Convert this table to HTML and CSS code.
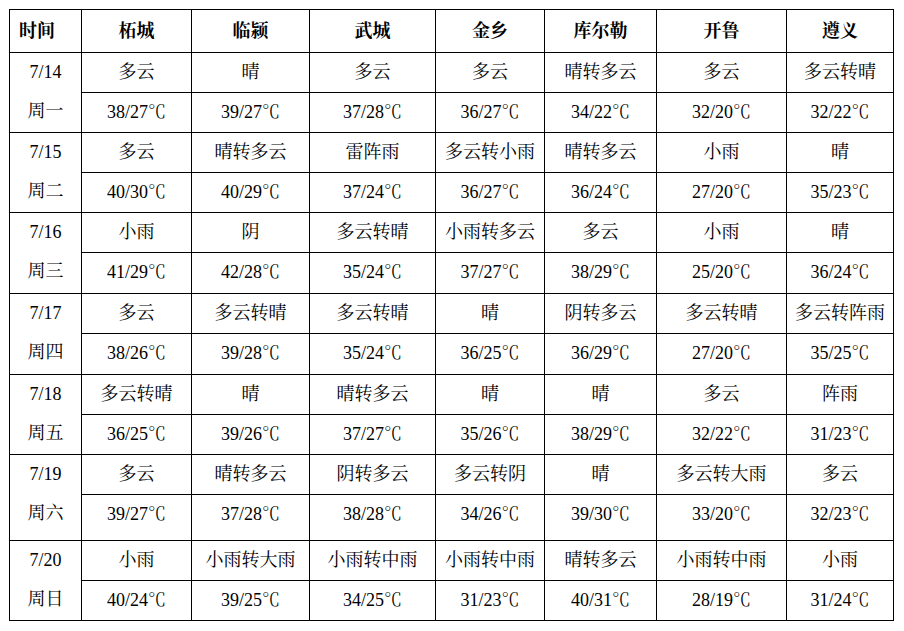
FILE: index.html
```html
<!DOCTYPE html>
<html lang="zh">
<head>
<meta charset="utf-8">
<title>天气预报</title>
<link rel="stylesheet" href="styles.css">
</head>
<body>
<div class="table">
  <div class="cell head first">时间</div>
  <div class="cell head">柘城</div>
  <div class="cell head">临颍</div>
  <div class="cell head">武城</div>
  <div class="cell head">金乡</div>
  <div class="cell head">库尔勒</div>
  <div class="cell head">开鲁</div>
  <div class="cell head">遵义</div>

  <div class="cell date"><span>7/14</span><span>周一</span></div>
  <div class="cell">多云</div><div class="cell">晴</div><div class="cell">多云</div><div class="cell">多云</div><div class="cell">晴转多云</div><div class="cell">多云</div><div class="cell">多云转晴</div>
  <div class="cell">38/27<span class="u">℃</span></div><div class="cell">39/27<span class="u">℃</span></div><div class="cell">37/28<span class="u">℃</span></div><div class="cell">36/27<span class="u">℃</span></div><div class="cell">34/22<span class="u">℃</span></div><div class="cell">32/20<span class="u">℃</span></div><div class="cell">32/22<span class="u">℃</span></div>

  <div class="cell date"><span>7/15</span><span>周二</span></div>
  <div class="cell">多云</div><div class="cell">晴转多云</div><div class="cell">雷阵雨</div><div class="cell">多云转小雨</div><div class="cell">晴转多云</div><div class="cell">小雨</div><div class="cell">晴</div>
  <div class="cell">40/30<span class="u">℃</span></div><div class="cell">40/29<span class="u">℃</span></div><div class="cell">37/24<span class="u">℃</span></div><div class="cell">36/27<span class="u">℃</span></div><div class="cell">36/24<span class="u">℃</span></div><div class="cell">27/20<span class="u">℃</span></div><div class="cell">35/23<span class="u">℃</span></div>

  <div class="cell date"><span>7/16</span><span>周三</span></div>
  <div class="cell">小雨</div><div class="cell">阴</div><div class="cell">多云转晴</div><div class="cell">小雨转多云</div><div class="cell">多云</div><div class="cell">小雨</div><div class="cell">晴</div>
  <div class="cell">41/29<span class="u">℃</span></div><div class="cell">42/28<span class="u">℃</span></div><div class="cell">35/24<span class="u">℃</span></div><div class="cell">37/27<span class="u">℃</span></div><div class="cell">38/29<span class="u">℃</span></div><div class="cell">25/20<span class="u">℃</span></div><div class="cell">36/24<span class="u">℃</span></div>

  <div class="cell date"><span>7/17</span><span>周四</span></div>
  <div class="cell">多云</div><div class="cell">多云转晴</div><div class="cell">多云转晴</div><div class="cell">晴</div><div class="cell">阴转多云</div><div class="cell">多云转晴</div><div class="cell">多云转阵雨</div>
  <div class="cell">38/26<span class="u">℃</span></div><div class="cell">39/28<span class="u">℃</span></div><div class="cell">35/24<span class="u">℃</span></div><div class="cell">36/25<span class="u">℃</span></div><div class="cell">36/29<span class="u">℃</span></div><div class="cell">27/20<span class="u">℃</span></div><div class="cell">35/25<span class="u">℃</span></div>

  <div class="cell date"><span>7/18</span><span>周五</span></div>
  <div class="cell">多云转晴</div><div class="cell">晴</div><div class="cell">晴转多云</div><div class="cell">晴</div><div class="cell">晴</div><div class="cell">多云</div><div class="cell">阵雨</div>
  <div class="cell">36/25<span class="u">℃</span></div><div class="cell">39/26<span class="u">℃</span></div><div class="cell">37/27<span class="u">℃</span></div><div class="cell">35/26<span class="u">℃</span></div><div class="cell">38/29<span class="u">℃</span></div><div class="cell">32/22<span class="u">℃</span></div><div class="cell">31/23<span class="u">℃</span></div>

  <div class="cell date"><span>7/19</span><span>周六</span></div>
  <div class="cell">多云</div><div class="cell">晴转多云</div><div class="cell">阴转多云</div><div class="cell">多云转阴</div><div class="cell">晴</div><div class="cell">多云转大雨</div><div class="cell">多云</div>
  <div class="cell">39/27<span class="u">℃</span></div><div class="cell">37/28<span class="u">℃</span></div><div class="cell">38/28<span class="u">℃</span></div><div class="cell">34/26<span class="u">℃</span></div><div class="cell">39/30<span class="u">℃</span></div><div class="cell">33/20<span class="u">℃</span></div><div class="cell">32/23<span class="u">℃</span></div>

  <div class="cell date"><span>7/20</span><span>周日</span></div>
  <div class="cell">小雨</div><div class="cell">小雨转大雨</div><div class="cell">小雨转中雨</div><div class="cell">小雨转中雨</div><div class="cell">晴转多云</div><div class="cell">小雨转中雨</div><div class="cell">小雨</div>
  <div class="cell">40/24<span class="u">℃</span></div><div class="cell">39/25<span class="u">℃</span></div><div class="cell">34/25<span class="u">℃</span></div><div class="cell">31/23<span class="u">℃</span></div><div class="cell">40/31<span class="u">℃</span></div><div class="cell">28/19<span class="u">℃</span></div><div class="cell">31/24<span class="u">℃</span></div>
</div>
</body>
</html>
```
FILE: styles.css
```css
html, body {
  margin: 0;
  padding: 0;
  background: #fff;
}
body {
  padding: 9px 0 0 9px;
  font-family: "Liberation Serif", "Noto Serif CJK SC", "Noto Sans CJK SC", serif;
  font-size: 18px;
  color: #000;
}
.table {
  display: grid;
  width: max-content;
  grid-template-columns: 71px 109px 117px 125px 108px 111px 129px 106px;
  grid-template-rows: 42px 39px 39px 39px 39px 39px 40px 39px 40px 39px 39px 39px 45px 39px 39px;
  gap: 1px;
  background: #000;
  border: 1px solid #000;
}
.cell {
  background: #fff;
  text-align: center;
  line-height: 39px;
  white-space: nowrap;
  overflow: hidden;
}
.u {
  font-family: "Noto Serif CJK SC", "Noto Sans CJK SC", sans-serif;
  font-weight: 300;
  line-height: 1;
}
.head {
  font-weight: bold;
  line-height: 42px;
}
.head.first {
  text-align: left;
  padding-left: 9px;
}
.date {
  grid-row: span 2;
  display: flex;
  flex-direction: column;
}
.date span {
  display: block;
  height: 39px;
  line-height: 39px;
}
```
